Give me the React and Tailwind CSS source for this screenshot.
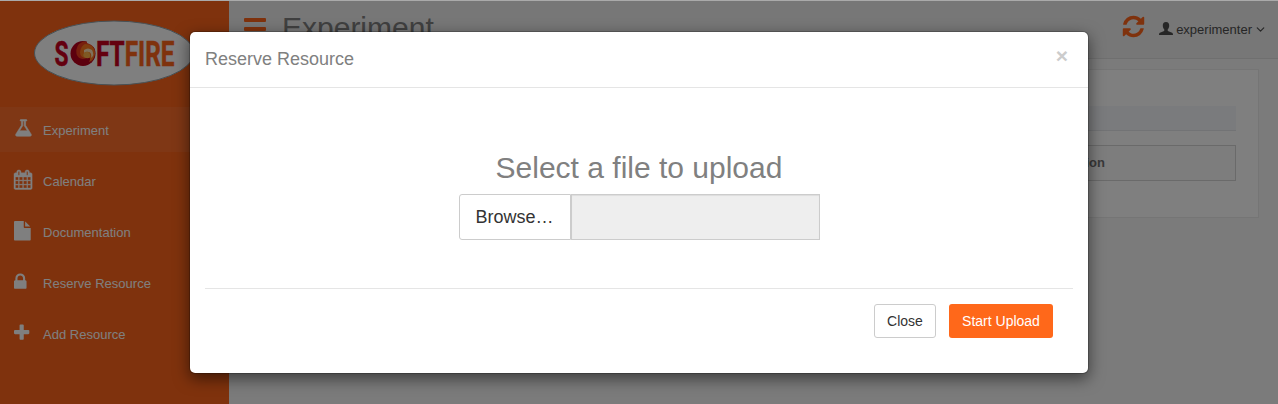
import { ChevronDown } from "lucide-react";

const NAV = [
  {
    label: "Experiment",
    active: true,
    box: "-40 0 1792 1792",
    stroke: 50,
    d: "M1527 1372q56 89 21.5 152.5t-140.5 63.5h-1152q-106 0-140.5-63.5t21.5-152.5l503-793v-399h-64q-26 0-45-19t-19-45 19-45 45-19h512q26 0 45 19t19 45-19 45-45 19h-64v399zm-779-725l-272 429h712l-272-429-20-31v-436h-128v436z",
  },
  {
    label: "Calendar",
    box: "64 0 1792 1792",
    stroke: 36,
    d: "M192 1664h288v-288h-288v288zm352 0h320v-288h-320v288zm-352-352h288v-320h-288v320zm352 0h320v-320h-320v320zm-352-384h288v-288h-288v288zm736 736h320v-288h-320v288zm-384-736h320v-288h-320v288zm768 736h288v-288h-288v288zm-384-352h320v-320h-320v320zm-352-864v-288q0-13-9.5-22.5t-22.5-9.5h-64q-13 0-22.5 9.5t-9.5 22.5v288q0 13 9.5 22.5t22.5 9.5h64q13 0 22.5-9.5t9.5-22.5zm736 864h288v-320h-288v320zm-384-384h320v-288h-320v288zm384 0h288v-288h-288v288zm32-480v-288q0-13-9.5-22.5t-22.5-9.5h-64q-13 0-22.5 9.5t-9.5 22.5v288q0 13 9.5 22.5t22.5 9.5h64q13 0 22.5-9.5t9.5-22.5zm384-64v1280q0 52-38 90t-90 38h-1408q-52 0-90-38t-38-90v-1280q0-52 38-90t90-38h128v-96q0-66 47-113t113-47h64q66 0 113 47t47 113v96h384v-96q0-66 47-113t113-47h64q66 0 113 47t47 113v96h128q52 0 90 38t38 90z",
  },
  {
    label: "Documentation",
    box: "128 0 1792 1792",
    stroke: 0,
    d: "M1152 512v-472q22 14 36 28l408 408q14 14 28 36h-472zm-128 32q0 40 28 68t68 28h544v1056q0 40-28 68t-68 28h-1344q-40 0-68-28t-28-68v-1600q0-40 28-68t68-28h800v544z",
  },
  {
    label: "Reserve Resource",
    box: "320 0 1792 1792",
    stroke: 0,
    d: "M640 768h512v-192q0-106-75-181t-181-75-181 75-75 181v192zm832 96v576q0 40-28 68t-68 28h-960q-40 0-68-28t-28-68v-576q0-40 28-68t68-28h32v-192q0-184 132-316t316-132 316 132 132 316v192h32q40 0 68 28t28 68z",
  },
  {
    label: "Add Resource",
    box: "192 0 1792 1792",
    stroke: 0,
    d: "M1600 736v192q0 40-28 68t-68 28h-416v416q0 40-28 68t-68 28h-192q-40 0-68-28t-28-68v-416h-416q-40 0-68-28t-28-68v-192q0-40 28-68t68-28h416v-416q0-40 28-68t68-28h192q40 0 68 28t28 68v416h416q40 0 68 28t28 68z",
  },
];

function Logo() {
  return (
    <svg className="block h-[66px] w-[164px]" viewBox="0 0 164 66">
      <ellipse cx="81" cy="33" rx="79.5" ry="32" fill="#fff" stroke="#8fa3ad" />
      <g fontFamily="Roboto, sans-serif" fontWeight="700" fontSize="35" strokeWidth="0.5">
        <text x="21.500" y="46" fill="#c8001e" stroke="#c8001e" textLength="14" lengthAdjust="spacingAndGlyphs">S</text>
        <text y="46" textLength="78.500" lengthAdjust="spacingAndGlyphs" x="63">
          <tspan fill="#c8001e" stroke="#c8001e">FT</tspan>
          <tspan fill="#ff651b" stroke="#ff651b">FIRE</tspan>
        </text>
      </g>
      <circle cx="50" cy="33.500" r="12.500" fill="#b8001c" />
      <path d="M50 21.500Q59 21 62 30Q63 38 57 43Q61 35 54 38Q46 41 43.500 34Q42 25 50 21.500Z" fill="#ee3f1c" />
      <path d="M52 24Q61 24 62 33Q61 40 56 42Q59 37 54 38Q47 38 47 32Q48 26 52 24Z" fill="#ff7a1f" />
      <path d="M51 30Q55 27 59 30Q62 35 58 38Q59 33 56 32Q53 31 51 33Z" fill="#ffe3b8" />
      <path d="M51 33Q55 30 57 34Q58 39 53 38Q49 37 51 33Z" fill="#ffb347" />
      <path d="M54 21Q60 23 62 28Q58 24 54 23Z" fill="#fff" />
    </svg>
  );
}

function Sidebar() {
  return (
    <aside className="w-[229px] shrink-0 bg-[#ff651b]">
      <div className="flex h-[106px] pl-[33px] pt-[19px]">
        <Logo />
      </div>
      <nav className="flex flex-col gap-1.5">
        {NAV.map((item) => (
          <a
            key={item.label}
            className={
              item.active
                ? "flex h-[45px] items-center bg-[#ff6e2a] pl-[13.5px] text-white"
                : "flex h-[45px] items-center pl-[13.5px] text-white"
            }
          >
            <svg
              className="mb-px size-[19.5px] shrink-0"
              viewBox={item.box}
              fill="currentColor"
              stroke="currentColor"
              strokeWidth={item.stroke}
              overflow="visible"
            >
              <path d={item.d} />
            </svg>
            <span className="ml-[10px] pt-0.5 text-[13px] tracking-[0.02px] whitespace-nowrap">{item.label}</span>
          </a>
        ))}
      </nav>
    </aside>
  );
}

function Header() {
  return (
    <header className="flex h-[58px] items-start justify-between border-b border-[#dedede] bg-[#eee] pr-[11px] pl-[15px]">
      <div className="flex items-start">
        <div className="mt-[17px] flex w-[22px] flex-col gap-[5px]">
          <i className="h-1 rounded-[1px] bg-[#ff651b]" />
          <i className="h-1 rounded-[1px] bg-[#ff651b]" />
          <i className="h-1 rounded-[1px] bg-[#ff651b]" />
        </div>
        <h1 className="mt-[9px] ml-4 text-[30px] leading-[36px] text-[#808080]">Experiment</h1>
      </div>
      <div className="flex items-start">
        <svg className="mt-[13px] size-[25px]" viewBox="0 0 1792 1792" fill="#ff651b">
          <path d="M1639 1056q0 5-1 7-64 268-268 434.5t-478 166.5q-146 0-282.5-55t-243.5-157l-129 129q-19 19-45 19t-45-19-19-45v-448q0-26 19-45t45-19h448q26 0 45 19t19 45-19 45l-137 137q71 66 161 102t187 36q134 0 250-65t186-179q11-17 53-117 8-23 30-23h192q13 0 22.5 9.5t9.5 22.5zm25-800v448q0 26-19 45t-45 19h-448q-26 0-45-19t-19-45 19-45l138-138q-148-137-349-137-134 0-250 65t-186 179q-11 17-53 117-8 23-30 23h-199q-13 0-22.5-9.5t-9.5-22.5v-7q65-268 270-434.5t480-166.5q146 0 284 55.5t245 156.5l130-129q19-19 45-19t45 19 19 45z" />
        </svg>
        <svg className="mt-[21px] ml-[13px] h-[13px] w-[14px]" viewBox="0 0 14 13" fill="#4d4d4d">
          <path d="M7 0C9.300 0 10.300 1.500 10.200 3.700C10.200 5.300 9.600 6.300 8.700 7.400V8.500C8.700 9 9.200 9.300 10 9.600L12.500 10.600C13.600 11 14 11.500 14 13H0C0 11.500.4 11 1.500 10.600L4 9.600C4.800 9.300 5.300 9 5.300 8.500V7.400C4.400 6.300 3.800 5.300 3.800 3.700C3.700 1.500 4.700 0 7 0Z" />
        </svg>
        <span className="mt-[19px] ml-[3px] text-[13px] leading-[20px] text-[#4d4d4d]">experimenter</span>
        <ChevronDown className="mt-[22px] ml-0.5 size-[13px] text-[#4d4d4d]" strokeWidth={2.25} />
      </div>
    </header>
  );
}

function Content() {
  return (
    <main className="flex-1 bg-[#f7f7f7] pt-2.5 pr-[19px] pl-5">
      <section className="flex h-[149px] flex-col gap-[14px] border border-[#eaeaea] bg-white pt-9 pr-[22px] pl-[22px]">
        <div className="h-[25px] border-b border-[#e4e6ea] bg-[#f5f7fa]" />
        <div className="flex h-9 items-center justify-end border border-[#d5d5d5] bg-[#fafafa] pr-[130px] pb-px text-[13px] font-bold text-[#737373]">
          Description
        </div>
      </section>
    </main>
  );
}

function UploadModal() {
  return (
    <div className="h-[343px] w-[900px] rounded-md border border-black/20 bg-white bg-clip-padding shadow-[0_5px_15px_rgba(0,0,0,0.5)]">
      <div className="flex h-14 items-start justify-between border-b border-[#e5e5e5] px-[15px]">
        <h4 className="mt-[15px] text-[18px] leading-[24px] text-[#808080]">Reserve Resource</h4>
        <button className="mt-3 mr-[5px] text-[21px] leading-[24px] font-bold text-[#ccc]">×</button>
      </div>
      <div className="mx-[15px] flex h-[201px] flex-col items-center border-b border-[#e5e5e5] pt-[60px]">
        <h2 className="text-[30px] leading-[40px] text-[#808080]">Select a file to upload</h2>
        <div className="mt-[6px] flex h-[46px] w-[361px] text-[18px] text-[#333]">
          <button className="w-[112px] shrink-0 rounded-l-[3px] border border-[#ccc] bg-white">Browse…</button>
          <div className="flex-1 border border-[#ccc] bg-[#eee] shadow-[inset_0_1px_1px_rgba(0,0,0,0.075)]" />
        </div>
      </div>
      <div className="flex justify-end gap-[13px] pt-[15px] pr-[35px] text-[14px]">
        <button className="h-[34px] w-[62px] rounded-[3px] border border-[#ccc] bg-white text-[#333]">Close</button>
        <button className="h-[34px] w-[104px] rounded-[3px] bg-[#ff681a] text-white">Start Upload</button>
      </div>
    </div>
  );
}

export default function App() {
  return (
    <div className="relative h-[404px] w-[1278px] overflow-hidden font-['Liberation_Sans',Arial,sans-serif]">
      <div className="flex h-full flex-col">
        <div className="flex min-h-0 flex-1 pt-px">
          <Sidebar />
          <div className="flex min-w-0 flex-1 flex-col">
            <Header />
            <Content />
          </div>
        </div>
      </div>
      <div className="absolute inset-0 flex items-start justify-center border-t border-[#aaa] bg-black/50 bg-clip-padding pt-[30px]">
        <UploadModal />
      </div>
    </div>
  );
}
